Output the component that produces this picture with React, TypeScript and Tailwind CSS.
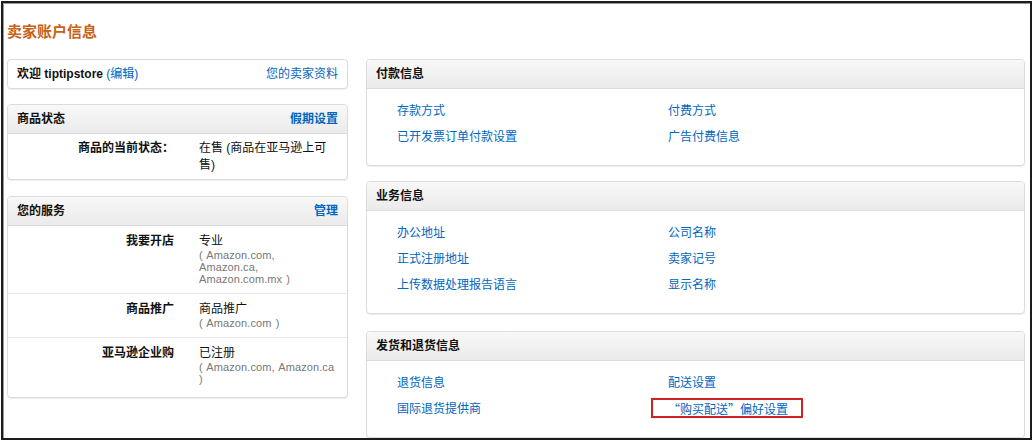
import type { ReactNode } from 'react';

const linkCls = 'text-[#0066c0] hover:underline cursor-pointer';

function Panel({ title, action, children }: { title: string; action?: string; children: ReactNode }) {
  return (
    <div className="rounded-[4px] border border-[#dcdcdc] bg-white shadow-[0_1px_1px_rgba(0,0,0,0.07)] overflow-hidden">
      <div className="h-[29px] flex items-center justify-between px-[9px] border-b border-[#dcdcdc] bg-gradient-to-b from-[#f8f8f8] to-[#ebebeb]">
        <span className="text-[12px] font-bold text-[#111]">{title}</span>
        {action && <span className={`text-[12px] font-bold ${linkCls}`}>{action}</span>}
      </div>
      {children}
    </div>
  );
}

function ServiceRow({ label, value, markets, last }: { label: string; value: string; markets: string; last?: boolean }) {
  return (
    <div className={`grid grid-cols-[166px_1fr] gap-x-[25px] pr-[11px] pt-[7px] ${last ? 'pb-[12px]' : 'pb-[8px] border-b border-[#e6e6e6]'}`}>
      <div className="text-right text-[12px] font-bold leading-[16px] text-[#111]">{label}</div>
      <div>
        <div className="text-[12px] leading-[16px] text-[#111]">{value}</div>
        <div className="text-[11px] leading-[12px] tracking-[0.1px] [word-spacing:1px] text-[#777]">{markets}</div>
      </div>
    </div>
  );
}

function LinkGrid({ links, mark }: { links: [string, string][]; mark?: string }) {
  return (
    <div className="grid grid-cols-[271px_1fr] pl-[30px] pt-[9px] pb-[15px]">
      {links.flat().map((l) => (
        <div key={l} className="h-[26px] leading-[26px] text-[12px] relative">
          <span className={`${linkCls} ${mark === l ? "font-['Noto_Sans_CJK_SC',sans-serif]" : ''}`}>{l}</span>
          {mark === l && (
            <div className="absolute left-[-17px] top-[2px] w-[152px] h-[20px] border-2 border-[#cf2222] pointer-events-none" />
          )}
        </div>
      ))}
    </div>
  );
}

export default function App() {
  return (
    <div className="w-[1034px] h-[446px] bg-white p-px font-['Liberation_Sans','Noto_Sans_CJK_SC',sans-serif]">
      <div className="w-[1031px] h-[439px] border-2 border-[#1c1c1c] shadow-[inset_1px_1px_0_#9a9a9a] overflow-hidden px-[4px] pt-[19px]">
        <h1 className="h-[20px] leading-[20px] text-[15px] font-bold text-[#c96216]">卖家账户信息</h1>

        <div className="mt-[17px] flex gap-[18px] items-start">
          {/* left column */}
          <div className="w-[341px] flex flex-col gap-[15px]">
            <div className="rounded-[4px] border border-[#dcdcdc] bg-white shadow-[0_1px_1px_rgba(0,0,0,0.07)]">
              <div className="h-[28px] flex items-center justify-between px-[9px] text-[12px]">
                <span>
                  <span className="font-bold text-[#111]">欢迎 tiptipstore</span>{' '}
                  <span className={linkCls}>(编辑)</span>
                </span>
                <span className={linkCls}>您的卖家资料</span>
              </div>
            </div>

            <Panel title="商品状态" action="假期设置">
              <div className="grid grid-cols-[166px_1fr] gap-x-[25px] pr-[11px] pt-[6px] pb-[5px]">
                <div className="text-right text-[12px] font-bold leading-[17px] text-[#111]">商品的当前状态：</div>
                <div className="text-[12px] leading-[17px] text-[#111]">在售 (商品在亚马逊上可售)</div>
              </div>
            </Panel>

            <div className="mt-px">
              <Panel title="您的服务" action="管理">
                <ServiceRow label="我要开店" value="专业" markets="( Amazon.com, Amazon.ca, Amazon.com.mx )" />
                <ServiceRow label="商品推广" value="商品推广" markets="( Amazon.com )" />
                <ServiceRow label="亚马逊企业购" value="已注册" markets="( Amazon.com, Amazon.ca )" last />
              </Panel>
            </div>
          </div>

          {/* right column */}
          <div className="w-[659px] flex flex-col gap-[15px]">
            <Panel title="付款信息">
              <LinkGrid links={[['存款方式', '付费方式'], ['已开发票订单付款设置', '广告付费信息']]} />
            </Panel>
            <Panel title="业务信息">
              <LinkGrid
                links={[
                  ['办公地址', '公司名称'],
                  ['正式注册地址', '卖家记号'],
                  ['上传数据处理报告语言', '显示名称'],
                ]}
              />
            </Panel>
            <div className="mt-[2px]">
              <Panel title="发货和退货信息">
                <LinkGrid
                  links={[['退货信息', '配送设置'], ['国际退货提供商', '“购买配送”偏好设置']]}
                  mark="“购买配送”偏好设置"
                />
              </Panel>
            </div>
          </div>
        </div>
      </div>
    </div>
  );
}
